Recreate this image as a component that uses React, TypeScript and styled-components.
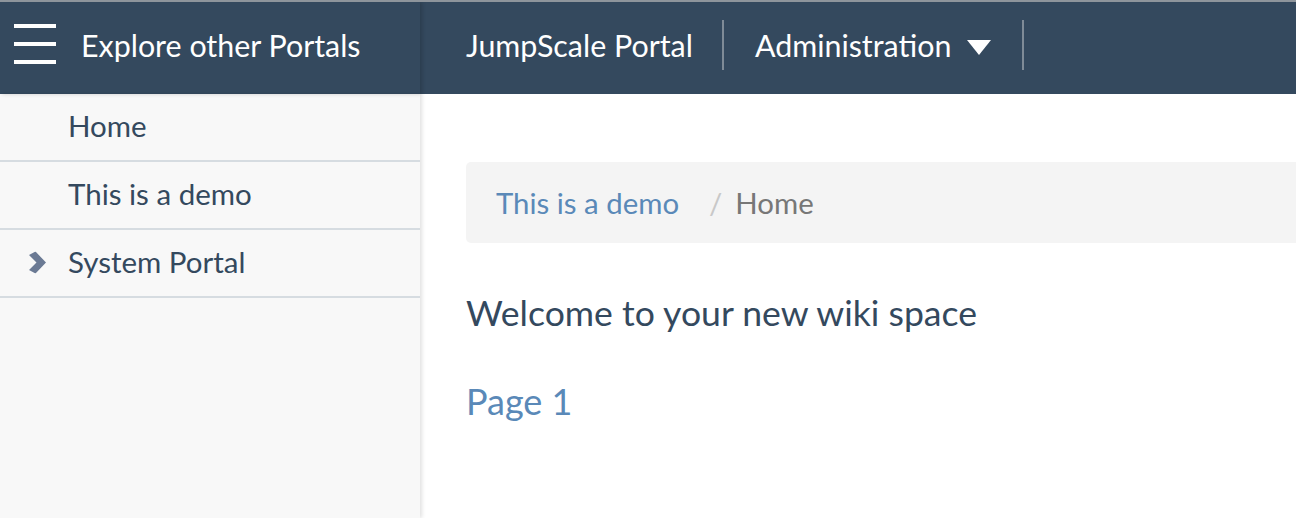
import React from "react";
import styled, { createGlobalStyle } from "styled-components";

const Global = createGlobalStyle`
  html, body { margin: 0; padding: 0; background: #fff; }
  body { font-family: Lato, "Open Sans", sans-serif; overflow: hidden; }
  * { box-sizing: border-box; }
`;

const Page = styled.div`
  width: 1296px;
  height: 518px;
  display: flex;
  flex-direction: column;
  overflow: hidden;
  border-top: 2px solid #8e959c;
`;

const TopBar = styled.header`
  height: 92px;
  background: #34495e;
  display: flex;
  align-items: stretch;
  flex-shrink: 0;
`;

const BrandArea = styled.div`
  width: 420px;
  display: flex;
  align-items: center;
  padding: 0 0 6px 14px;
  gap: 25px;
  box-shadow: 2px 0 4px rgba(0, 0, 0, 0.18);
  position: relative;
  z-index: 1;
`;

const Burger = styled.span`
  width: 42px;
  height: 40px;
  margin-bottom: 2px;
  display: flex;
  flex-direction: column;
  justify-content: space-between;
  & > i {
    display: block;
    height: 4px;
    background: #fff;
  }
`;

const NavText = styled.span`
  color: #fff;
  font-size: 30.4px;
  white-space: nowrap;
`;

const NavList = styled.nav`
  display: flex;
  align-items: center;
  padding: 0 0 6px 46px;
`;

const NavItem = styled.div`
  display: flex;
  align-items: center;
  height: 50px;
  padding: 0 31px 0 31px;
  border-right: 2px solid #7f8b97;
  &:first-child { padding-left: 0; padding-right: 29px; }
`;

const Caret = styled.span`
  width: 0;
  height: 0;
  margin-left: 16px;
  border-left: 12px solid transparent;
  border-right: 12px solid transparent;
  border-top: 15px solid #fff;
  margin-top: 5px;
`;

const Body = styled.div`
  flex: 1;
  display: flex;
`;

const Sidebar = styled.aside`
  width: 420px;
  background: #f8f8f8;
  box-shadow: 2px 0 4px rgba(0, 0, 0, 0.12);
  flex-shrink: 0;
`;

const SideRow = styled.div`
  height: 68px;
  display: flex;
  align-items: center;
  padding: 0 0 3px 68px;
  position: relative;
  font-size: 29.5px;
  color: #34495e;
  border-bottom: 2px solid #d6dce1;
`;

const Chevron = styled.svg`
  position: absolute;
  left: 28px;
  top: 50%;
  transform: translateY(-52%);
`;

const Main = styled.main`
  flex: 1;
  padding: 68px 0 0 46px;
  display: flex;
  flex-direction: column;
`;

const Breadcrumb = styled.div`
  height: 81px;
  background: #f4f4f4;
  border-radius: 5px 0 0 5px;
  display: flex;
  align-items: center;
  padding-left: 30px;
  font-size: 29.4px;
`;

const CrumbLink = styled.a`
  color: #5a89b8;
  text-decoration: none;
`;

const CrumbSep = styled.span`
  color: #c8c8c8;
  padding: 0 13px 0 30px;
`;

const CrumbCurrent = styled.span`
  color: #777;
`;

const Heading = styled.p`
  margin: 48px 0 0;
  font-size: 35.6px;
  color: #34495e;
  line-height: 44px;
`;

const PageLink = styled.a`
  margin-top: 44px;
  font-size: 36px;
  color: #5a89b8;
  text-decoration: none;
  line-height: 44px;
`;

export default function App() {
  return (
    <>
      <Global />
      <Page>
        <TopBar>
          <BrandArea>
            <Burger>
              <i />
              <i />
              <i />
            </Burger>
            <NavText>Explore other Portals</NavText>
          </BrandArea>
          <NavList>
            <NavItem>
              <NavText>JumpScale Portal</NavText>
            </NavItem>
            <NavItem>
              <NavText>Administration</NavText>
              <Caret />
            </NavItem>
          </NavList>
        </TopBar>
        <Body>
          <Sidebar>
            <SideRow>Home</SideRow>
            <SideRow>This is a demo</SideRow>
            <SideRow>
              <Chevron width="19" height="22" viewBox="0 0 19 22">
                <path d="M1 3.5 L7.5 0 L18 11 L7.5 22 L1 18.5 L8.5 11 Z" fill="#6b7a94" />
              </Chevron>
              System Portal
            </SideRow>
          </Sidebar>
          <Main>
            <Breadcrumb>
              <CrumbLink href="#">This is a demo</CrumbLink>
              <CrumbSep>/</CrumbSep>
              <CrumbCurrent>Home</CrumbCurrent>
            </Breadcrumb>
            <Heading>Welcome to your new wiki space</Heading>
            <PageLink href="#">Page 1</PageLink>
          </Main>
        </Body>
      </Page>
    </>
  );
}
